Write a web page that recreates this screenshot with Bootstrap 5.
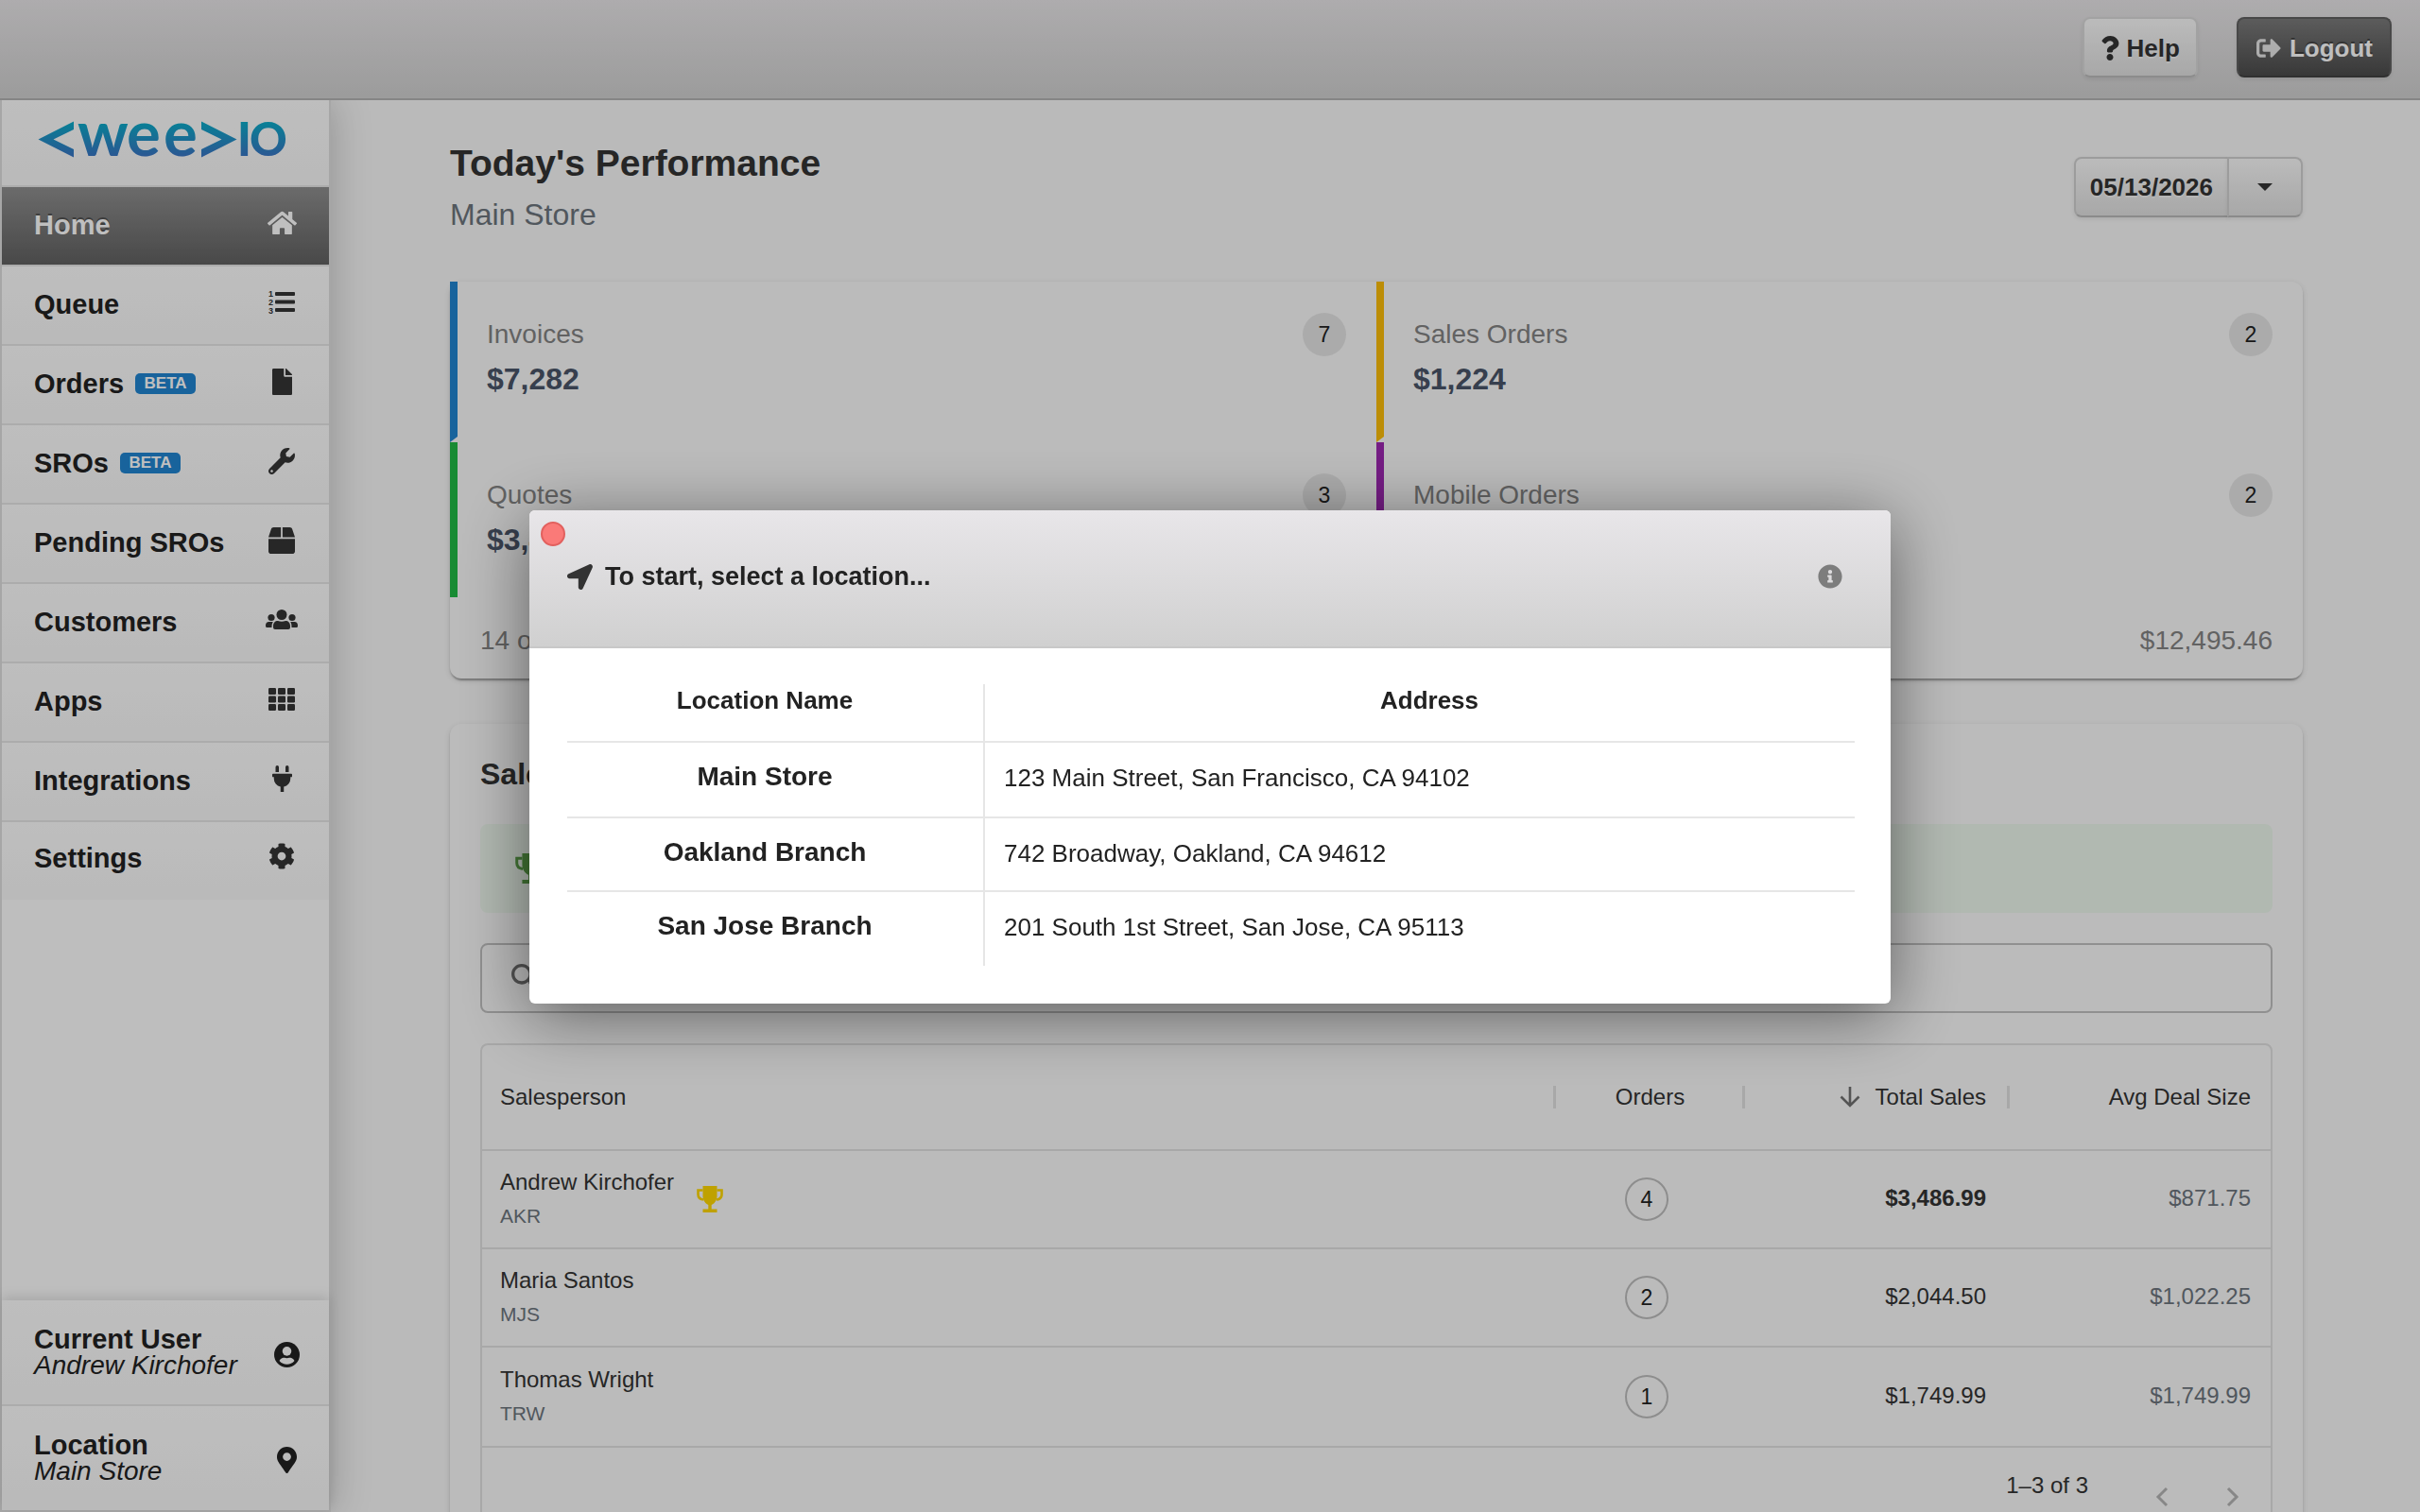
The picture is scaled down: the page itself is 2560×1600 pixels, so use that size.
<!DOCTYPE html>
<html lang="en">
<head>
<meta charset="utf-8">
<meta name="viewport" content="width=device-width, initial-scale=1">
<title>weeIO - Today's Performance</title>
<link href="https://cdn.jsdelivr.net/npm/bootstrap@5.3.0/dist/css/bootstrap.min.css" rel="stylesheet">
<style>
  :root { --bs-body-font-family: "Liberation Sans", Arial, sans-serif; --bs-body-color: #222; --bs-body-bg: #f8f8f8; }
  body { overflow: hidden; }
  svg { display: block; flex: none; overflow: visible; }
  svg:not([fill]) { fill: currentColor; }

  .app-top { height: 106px; border-bottom: 2px solid #b2b2b2; background: linear-gradient(#e8e6e8, #d0d0d0); padding: 0 30px 4px; gap: 41px; position: relative; flex: none; }
  .chrome-btn { height: 64px; font-size: 26px; line-height: 30px; font-weight: 700; border-radius: 8px; color: #333; background: linear-gradient(#fafafa, #e0e0e0); border: 2px solid #d0d0d0; border-bottom-color: #b8b8b8; text-shadow: 0 2px 0 rgba(255,255,255,.5); box-shadow: 0 2px 4px rgba(0,0,0,.08); }
  .chrome-btn:hover { background: linear-gradient(#fafafa, #e0e0e0); color: #333; }
  .help-btn { padding: 2px 17px 0; gap: 8px; border-color: #d8d8d8; border-bottom-color: #bbb; }
  .logout-btn, .logout-btn:hover { padding: 2px 18px 0; gap: 8px; color: #fff; background: linear-gradient(#7b7b7b, #4c4c4c); border-color: #606060; border-bottom-color: #404040; text-shadow: 0 -2px 0 rgba(0,0,0,.35); }
  .logout-btn svg { opacity: .85; }

  .side { width: 350px; flex: none; border: 2px solid #dedede; border-top: 0; background: #fefefe; box-shadow: 0 0 40px rgba(0,0,0,.22); clip-path: inset(0 -60px 0 0); z-index: 2; }
  .logo-box { height: 92px; border-bottom: 2px solid #e6e6e6; background: linear-gradient(#fefefe, #f8f8f8); }
  .side-item { height: 84px; padding: 0 32px 2px 34px; border-bottom: 2px solid #e6e6e6; background: linear-gradient(#fefefe, #f8f8f8); color: #222; font-size: 29px; line-height: 36px; font-weight: 700; }
  .side-item:hover { color: #222; }
  .side-item:last-child { border-bottom: 0; height: 82px; padding-bottom: 6px; }
  .side-item.active { color: #fff; background: linear-gradient(#8f8f8f, #616161); text-shadow: 0 -2px 0 rgba(0,0,0,.35); }
  .ico-box { width: 36px; height: 32px; margin-bottom: 4px; display: flex; align-items: center; justify-content: center; color: #353535; }
  .active .ico-box { color: #fff; }
  .beta-tag { font-size: 17px; line-height: 22px; height: 22px; width: 64px; text-align: center; border-radius: 5px; background: #2185d0; color: #fff; margin-left: 12px; }
  .side-foot { box-shadow: 0 -4px 12px rgba(0,0,0,.12); }
  .foot-item { height: 112px; padding: 0 27px 0 34px; border-bottom: 2px solid #e6e6e6; background: linear-gradient(#fefefe, #f8f8f8); color: #222; font-size: 29px; line-height: 28px; }
  .foot-item:last-child { height: 110px; border-bottom: 0; }
  .foot-item .ico-box { margin: 4px 0 0; }
  .foot-item em { font-size: 28px; }

  .content-area { padding: 44px 124px 0 126px; min-width: 0; overflow: hidden; }
  .page-title { font-size: 39px; line-height: 46px; font-weight: 700; margin: 0 0 11px; color: #333; }
  .page-sub { font-size: 32px; line-height: 40px; color: #6c757d; margin: 0 0 51px; }
  .date-group { margin-top: 16px; }
  .date-group .chrome-btn:first-child { padding: 0 15px; border-top-right-radius: 0; border-bottom-right-radius: 0; }
  .date-group .chrome-btn:last-child { width: 80px; margin-left: -2px; border-top-left-radius: 0; border-bottom-left-radius: 0; }

  .panel { background: #fafafa; border-radius: 12px; box-shadow: 0 4px 2px -2px rgba(0,0,0,.2), 0 2px 2px rgba(0,0,0,.14), 0 2px 6px rgba(0,0,0,.12); }
  .stat { height: 170px; padding: 33px 32px 0 31px; border-left: 8px solid; border-bottom: 6px solid transparent; }
  .stat-last { height: 164px; border-bottom: 0; }
  .stat-blue { border-left-color: #2185d0; } .stat-gold { border-left-color: #fbbd08; }
  .stat-green { border-left-color: #21ba45; } .stat-purple { border-left-color: #9c27b0; }
  .stat-name { font-size: 28px; line-height: 32px; color: #838383; padding-top: 7px; margin-bottom: 11px; }
  .stat-sum { font-size: 32px; line-height: 40px; font-weight: 700; color: #4a5568; }
  .count { width: 46px; height: 46px; border-radius: 50%; background: #e5e5e5; font-size: 23px; line-height: 46px; text-align: center; color: #222; }
  .count-line { background: none; border: 2px solid #bdbdbd; line-height: 43px; margin: 0 auto; }
  .panel-foot { height: 86px; padding: 6px 32px 0; font-size: 28px; line-height: 32px; color: #838383; }

  .board { padding: 33px 32px 40px; margin-top: 48px; }
  .board-title { font-size: 32px; line-height: 40px; font-weight: 700; margin: 0 0 33px; color: #333; }
  .leader { height: 94px; border-radius: 8px; background: #edf7ed; padding: 0 36px; margin-bottom: 32px; }
  .search-box { height: 74px; border: 2px solid #c0c0c0; border-radius: 8px; padding: 0 26px; gap: 16px; margin-bottom: 32px; color: #6f6f6f; }
  .search-box input { background: none; border: 0; box-shadow: none; font-size: 24px; }
  .grid-wrap { border: 2px solid #e0e0e0; border-radius: 8px; color: #333; }
  .people, .places { border-collapse: separate; border-spacing: 0; table-layout: fixed; margin: 0; }
  .people { --bs-table-bg: transparent; --bs-table-color: #333; font-size: 24px; line-height: 36px; }
  .people th, .people td { border-bottom: 2px solid #e0e0e0; padding: 0 20px 0 19px; vertical-align: middle; height: 104px; }
  .people th { height: 112px; font-weight: 400; background: linear-gradient(#e0e0e0, #e0e0e0) no-repeat right center / 3px 24px; }
  .people th:last-child { background: none; }
  .people tr:last-child td { height: 106px; }
  .people thead tr:last-child th { height: 112px; }
  .people .c-money { padding-right: 25px; }
  .people .c-avg { padding-right: 21px; }
  .people td.c-avg { color: #6c757d; }
  .people td.c-orders { padding: 0 20px 0 12px; }
  .people td.c-money, .people td.c-avg { padding-bottom: 2px; }
  .initials { font-size: 21px; color: #6c757d; }
  .col-orders { width: 200px; } .col-total { width: 280px; } .col-avg { width: 276px; }
  .pager { height: 104px; padding: 0 20px; font-size: 24px; color: #333; }
  .pager-text { margin: 0 58px 24px 0; }
  .pager button { border: 0; background: none; width: 40px; height: 40px; padding: 0; color: #b4b4b4; display: flex; align-items: center; justify-content: center; }
  .pager button + button { margin-left: 35px; }

  .modal-backdrop { --bs-backdrop-opacity: .25; }
  .modal { --bs-modal-width: 1440px; --bs-modal-margin: 0px; }
  .modal-dialog { padding-top: 2px; }
  .pick { border: 0; border-radius: 6px; box-shadow: 0 12px 70px rgba(0,0,0,.5); color: #222; background: #fff; }
  .pick-head { height: 146px; padding: 0 51px 4px 40px; border-bottom: 2px solid #c8c8c8; border-radius: 6px 6px 0 0; background: linear-gradient(#e8e6e9, #d0d0d0); }
  .pick-head h2 { font-size: 27px; line-height: 32px; font-weight: 700; margin: 0; gap: 13px; }
  .close-dot { position: absolute; left: 12px; top: 12px; width: 26px; height: 26px; border-radius: 50%; border: 2px solid #e2605e; background: #fa7a78; padding: 0; }
  .info-btn { border: 0; background: none; padding: 0; color: #7d7d7d; }
  .pick-body { padding: 38px 38px 40px 40px; }
  .places { --bs-table-color: #222; --bs-table-bg: #fff; font-size: 26px; line-height: 32px; }
  .places th, .places td { padding: 21px 0 0 20px; height: 78px; border-bottom: 2px solid #e6e6e6; vertical-align: top; }
  .places thead th { height: 62px; padding-top: 1px; text-align: center; }
  .places tbody tr:first-child > * { height: 80px; }
  .places tbody tr:last-child > * { border-bottom: 0; }
  .places tr > :first-child { width: 442px; padding-left: 0; padding-right: 22px; text-align: center; border-right: 2px solid #e6e6e6; }
  .places tbody th { font-size: 28px; padding-top: 20px; }
</style>
<script src="https://cdn.jsdelivr.net/npm/bootstrap@5.3.0/dist/js/bootstrap.bundle.min.js" defer></script>
</head>
<body>
<div class="d-flex flex-column vh-100">
  <header class="app-top d-flex align-items-center justify-content-end">
    <button type="button" class="btn chrome-btn help-btn d-flex align-items-center">
      <svg width="20" height="26" viewBox="0 0 384 512"><path d="M202.021 0C122.202 0 70.503 32.703 29.914 91.026c-7.363 10.58-5.093 25.086 5.178 32.874l43.138 32.709c10.373 7.865 25.132 6.026 33.253-4.148 25.049-31.381 43.63-49.449 82.757-49.449 30.764 0 68.816 19.799 68.816 49.631 0 22.552-18.617 34.134-48.993 51.164-35.423 19.86-82.299 44.576-82.299 106.405V320c0 13.255 10.745 24 24 24h72.471c13.255 0 24-10.745 24-24v-5.773c0-42.86 125.268-44.645 125.268-160.627C377.504 66.256 286.902 0 202.021 0zM192 373.459c-38.196 0-69.271 31.075-69.271 69.271 0 38.195 31.075 69.27 69.271 69.27s69.271-31.075 69.271-69.271-31.075-69.27-69.271-69.27z"/></svg>
      <span>Help</span>
    </button>
    <button type="button" class="btn chrome-btn logout-btn d-flex align-items-center">
      <svg width="28" height="26" viewBox="0 0 512 512"><path d="M497 273L329 441c-15 15-41 4.5-41-17v-96H152c-13.3 0-24-10.7-24-24v-96c0-13.3 10.7-24 24-24h136V88c0-21.4 25.9-32 41-17l168 168c9.3 9.4 9.3 24.6 0 34zM192 436v-40c0-6.6-5.4-12-12-12H96c-17.7 0-32-14.3-32-32V160c0-17.7 14.3-32 32-32h84c6.6 0 12-5.4 12-12V76c0-6.6-5.4-12-12-12H96c-53 0-96 43-96 96v192c0 53 43 96 96 96h84c6.6 0 12-5.4 12-12z"/></svg>
      <span>Logout</span>
    </button>
  </header>

  <div class="d-flex flex-grow-1" style="min-height:0">
    <aside class="side d-flex flex-column">
      <div class="logo-box">
        <svg width="346" height="90" viewBox="0 0 346 90" role="img" aria-label="weeIO">
          <defs><linearGradient id="brand" gradientUnits="userSpaceOnUse" x1="0" y1="24" x2="0" y2="60"><stop offset="0" stop-color="#0caac8"/><stop offset="1" stop-color="#3a74c4"/></linearGradient></defs>
          <g fill="url(#brand)" font-family="Lato, sans-serif" font-weight="700">
            <path d="M76 22.500V31L54.500 41.500 76 52V60.500L38.500 41.500z"/>
            <text font-size="67" x="80 132 171" y="59">wee</text>
            <path d="M211 22.500V31L232.500 41.500 211 52V60.500L248.500 41.500z"/>
            <text font-size="49" x="249 262" y="59" font-weight="900">IO</text>
          </g>
        </svg>
      </div>
      <nav class="d-flex flex-column" aria-label="Main">
        <a href="#" class="side-item active d-flex align-items-center text-decoration-none">Home
          <span class="ico-box ms-auto"><svg width="31" height="28" viewBox="0 0 576 512"><path d="M280.37 148.26L96 300.11V464a16 16 0 0 0 16 16l112.060-.29a16 16 0 0 0 15.920-16V368a16 16 0 0 1 16-16h64a16 16 0 0 1 16 16v95.640a16 16 0 0 0 16 16.050L464 480a16 16 0 0 0 16-16V300L295.670 148.260a12.190 12.190 0 0 0-15.300 0zM571.600 251.470L488 182.560V44.050a12 12 0 0 0-12-12h-56a12 12 0 0 0-12 12v72.610L318.470 43a48 48 0 0 0-61 0L4.340 251.470a12 12 0 0 0-1.600 16.900l25.500 31A12 12 0 0 0 45.150 301l235.220-193.740a12.190 12.190 0 0 1 15.300 0L530.900 301a12 12 0 0 0 16.900-1.600l25.500-31a12 12 0 0 0-1.700-16.930z"/></svg></span></a>
        <a href="#" class="side-item d-flex align-items-center text-decoration-none">Queue
          <span class="ico-box ms-auto"><svg width="28" height="26" viewBox="0 0 28 26"><rect x="7" y="2" width="21" height="4" rx="1"/><rect x="7" y="10.500" width="21" height="4" rx="1"/><rect x="7" y="19" width="21" height="4" rx="1"/><g font-size="9" font-weight="700" font-family="Liberation Sans, sans-serif"><text x="0" y="7">1</text><text x="0" y="16">2</text><text x="0" y="25">3</text></g></svg></span></a>
        <a href="#" class="side-item d-flex align-items-center text-decoration-none">Orders <span class="beta-tag">BETA</span>
          <span class="ico-box ms-auto"><svg width="21" height="28" viewBox="0 0 384 512"><path d="M224 136V0H24C10.700 0 0 10.700 0 24v464c0 13.300 10.700 24 24 24h336c13.300 0 24-10.700 24-24V160H248c-13.200 0-24-10.800-24-24zm160-14.100v6.100H256V0h6.100c6.400 0 12.500 2.500 17 7l97.900 98c4.500 4.500 7 10.600 7 16.900z"/></svg></span></a>
        <a href="#" class="side-item d-flex align-items-center text-decoration-none">SROs <span class="beta-tag">BETA</span>
          <span class="ico-box ms-auto"><svg width="28" height="28" viewBox="0 0 512 512"><path d="M507.730 109.100c-2.240-9.030-13.540-12.090-20.120-5.510l-74.360 74.360-67.880-11.310-11.310-67.880 74.360-74.360c6.620-6.620 3.430-17.900-5.660-20.160-47.380-11.740-99.550.91-136.580 37.930-39.640 39.640-50.550 97.100-34.050 147.200L18.740 402.760c-24.990 24.990-24.990 65.510 0 90.500 24.990 24.990 65.510 24.990 90.500 0l213.210-213.210c50.120 16.710 107.470 5.680 147.370-34.220 37.070-37.070 49.700-89.320 37.910-136.730zM64 472c-13.250 0-24-10.750-24-24 0-13.260 10.750-24 24-24s24 10.740 24 24c0 13.250-10.750 24-24 24z"/></svg></span></a>
        <a href="#" class="side-item d-flex align-items-center text-decoration-none">Pending SROs
          <span class="ico-box ms-auto"><svg width="28" height="28" viewBox="0 0 512 512"><path d="M509.500 184.600L458.900 32.800C452.400 13.200 434.100 0 413.400 0H272v192h238.700c-.4-2.500-.4-5-1.200-7.400zM240 0H98.600c-20.700 0-39 13.200-45.500 32.800L2.500 184.600c-.8 2.400-.8 4.900-1.200 7.400H240V0zM0 224v240c0 26.500 21.500 48 48 48h416c26.500 0 48-21.500 48-48V224H0z"/></svg></span></a>
        <a href="#" class="side-item d-flex align-items-center text-decoration-none">Customers
          <span class="ico-box ms-auto"><svg width="34" height="22" viewBox="0 0 34 22"><circle cx="17" cy="5.500" r="5.500"/><path d="M8 17.500c0-3.500 2-5.500 5-5.500q4 1.500 8 0c3 0 5 2 5 5.500V19q0 2-2 2H10q-2 0-2-2z"/><circle cx="6" cy="8.500" r="3.600"/><circle cx="28" cy="8.500" r="3.600"/><path d="M0 17c0-2.500 1.300-4 3.500-4h4.300C6.800 14.500 6.500 16 6.500 19H1.500Q0 19 0 17.500zM34 17c0-2.500-1.300-4-3.500-4h-4.300c1 1.500 1.300 3 1.300 6h5q1.500 0 1.500-1.500z"/></svg></span></a>
        <a href="#" class="side-item d-flex align-items-center text-decoration-none">Apps
          <span class="ico-box ms-auto"><svg width="28" height="24" viewBox="0 0 28 24"><rect width="8" height="7" rx="1.200"/><rect x="10" width="8" height="7" rx="1.200"/><rect x="20" width="8" height="7" rx="1.200"/><rect y="8.500" width="8" height="7" rx="1.200"/><rect x="10" y="8.500" width="8" height="7" rx="1.200"/><rect x="20" y="8.500" width="8" height="7" rx="1.200"/><rect y="17" width="8" height="7" rx="1.200"/><rect x="10" y="17" width="8" height="7" rx="1.200"/><rect x="20" y="17" width="8" height="7" rx="1.200"/></svg></span></a>
        <a href="#" class="side-item d-flex align-items-center text-decoration-none">Integrations
          <span class="ico-box ms-auto"><svg width="21" height="28" viewBox="0 0 384 512"><path d="M320,32a32,32,0,0,0-64,0v96h64Zm48,128H16A16,16,0,0,0,0,176v32a16,16,0,0,0,16,16H32v32A160.070,160.070,0,0,0,160,412.800V512h64V412.800A160.070,160.070,0,0,0,352,256V224h16a16,16,0,0,0,16-16V176A16,16,0,0,0,368,160ZM128,32a32,32,0,0,0-64,0v96h64Z"/></svg></span></a>
        <a href="#" class="side-item d-flex align-items-center text-decoration-none">Settings
          <span class="ico-box ms-auto"><svg width="28" height="28" viewBox="0 0 512 512"><path d="M487.400 315.700l-42.600-24.600c4.300-23.200 4.300-47 0-70.200l42.600-24.600c4.900-2.800 7.100-8.600 5.500-14-11.100-35.600-30-67.800-54.700-94.600-3.800-4.100-10-5.100-14.800-2.300L380.800 110c-17.900-15.400-38.500-27.300-60.800-35.100V25.800c0-5.600-3.900-10.500-9.400-11.700-36.700-8.200-74.300-7.800-109.200 0-5.500 1.200-9.400 6.100-9.400 11.700V75c-22.200 7.900-42.800 19.800-60.800 35.100L88.700 85.500c-4.900-2.800-11-1.900-14.800 2.300-24.700 26.700-43.600 58.900-54.700 94.600-1.700 5.400.6 11.200 5.500 14L67.300 221c-4.300 23.200-4.300 47 0 70.200l-42.600 24.600c-4.900 2.800-7.100 8.600-5.500 14 11.100 35.600 30 67.800 54.700 94.600 3.800 4.100 10 5.100 14.800 2.300l42.600-24.600c17.900 15.400 38.500 27.300 60.800 35.100v49.200c0 5.600 3.900 10.500 9.400 11.700 36.700 8.200 74.300 7.800 109.200 0 5.500-1.200 9.400-6.100 9.400-11.700v-49.200c22.200-7.900 42.800-19.800 60.800-35.100l42.600 24.600c4.900 2.800 11 1.900 14.800-2.300 24.700-26.700 43.600-58.900 54.700-94.600 1.500-5.500-.7-11.300-5.600-14.100zM256 336c-44.100 0-80-35.900-80-80s35.900-80 80-80 80 35.900 80 80-35.900 80-80 80z"/></svg></span></a>
      </nav>
      <div class="side-foot mt-auto">
        <a href="#" class="foot-item d-flex align-items-center justify-content-between text-decoration-none">
          <span class="d-flex flex-column"><strong>Current User</strong><em>Andrew Kirchofer</em></span>
          <span class="ico-box"><svg width="27" height="27" viewBox="0 0 26 26"><circle cx="13" cy="13" r="13" fill="#222"/><circle cx="13" cy="9.500" r="4.600" fill="#fcfcfc"/><path d="M5.300 19.200c1.200-2.600 4-3.100 5.200-3.100q2.500.9 5 0c1.200 0 4 .5 5.200 3.100-2 2.400-4.700 3.700-7.700 3.700s-5.700-1.300-7.700-3.700z" fill="#fcfcfc"/></svg></span></a>
        <a href="#" class="foot-item d-flex align-items-center justify-content-between text-decoration-none">
          <span class="d-flex flex-column"><strong>Location</strong><em>Main Store</em></span>
          <span class="ico-box"><svg width="21" height="28" viewBox="0 0 384 512"><path fill="#222" d="M172.268 501.670C26.970 291.031 0 269.413 0 192 0 85.961 85.961 0 192 0s192 85.961 192 192c0 77.413-26.970 99.031-172.268 309.670-9.535 13.774-29.930 13.773-39.464 0zM192 272c44.183 0 80-35.817 80-80s-35.817-80-80-80-80 35.817-80 80 35.817 80 80 80z"/></svg></span></a>
      </div>
    </aside>

    <main class="content-area flex-grow-1">
      <div class="d-flex justify-content-between align-items-start">
        <div>
          <h1 class="page-title">Today's Performance</h1>
          <p class="page-sub">Main Store</p>
        </div>
        <div class="date-group d-flex">
          <button type="button" class="btn chrome-btn">05/13/2026</button>
          <button type="button" class="btn chrome-btn d-flex align-items-center justify-content-center" aria-label="Choose date"><svg width="16" height="8" viewBox="0 0 16 8"><path d="M0 0h16L8 8z"/></svg></button>
        </div>
      </div>

      <section class="panel">
        <div class="row g-0">
          <div class="col-6"><div class="stat stat-blue d-flex justify-content-between"><div><div class="stat-name">Invoices</div><div class="stat-sum">$7,282</div></div><span class="count">7</span></div></div>
          <div class="col-6"><div class="stat stat-gold d-flex justify-content-between"><div><div class="stat-name">Sales Orders</div><div class="stat-sum">$1,224</div></div><span class="count">2</span></div></div>
          <div class="col-6"><div class="stat stat-last stat-green d-flex justify-content-between"><div><div class="stat-name">Quotes</div><div class="stat-sum">$3,488</div></div><span class="count">3</span></div></div>
          <div class="col-6"><div class="stat stat-last stat-purple d-flex justify-content-between"><div><div class="stat-name">Mobile Orders</div><div class="stat-sum">$501</div></div><span class="count">2</span></div></div>
        </div>
        <div class="panel-foot d-flex align-items-center justify-content-between"><span>14 orders</span><span>$12,495.46</span></div>
      </section>

      <section class="panel board">
        <h2 class="board-title">Sales</h2>
        <div class="leader d-flex align-items-center">
          <svg width="34" height="32" viewBox="0 0 28 28" fill="#5a9e48"><path d="M6.500 0h15v11c0 4-3 8-5.800 9v4.500h5.800V28h-15v-3.500h5.800V20c-2.800-1-5.800-5-5.800-9z"/><path d="M6.500 4.500H1.500V9c0 3 2 5 5.500 5.500M21.500 4.500h5V9c0 3-2 5-5.500 5.500" fill="none" stroke="#5a9e48" stroke-width="2.600"/></svg>
        </div>
        <div class="search-box d-flex align-items-center">
          <svg width="40" height="40" viewBox="0 0 24 24"><path d="M15.500 14h-.79l-.28-.27C15.410 12.590 16 11.110 16 9.500 16 5.910 13.090 3 9.500 3S3 5.910 3 9.500 5.910 16 9.500 16c1.610 0 3.090-.59 4.230-1.570l.27.28v.79l5 4.990L20.490 19l-4.990-5zm-6 0C7.010 14 5 11.990 5 9.500S7.010 5 9.500 5 14 7.010 14 9.500 11.990 14 9.500 14z"/></svg>
          <input type="search" class="form-control" aria-label="Search salespeople">
        </div>
        <div class="grid-wrap">
          <table class="table people">
            <colgroup><col><col class="col-orders"><col class="col-total"><col class="col-avg"></colgroup>
            <thead><tr>
              <th scope="col">Salesperson</th>
              <th scope="col" class="text-center">Orders</th>
              <th scope="col" class="c-money"><span class="d-flex align-items-center justify-content-end"><svg class="me-3" width="22" height="22" viewBox="0 0 22 22" fill="none" stroke="#707070" stroke-width="2.600"><path d="M11 0v19M1.500 10.500L11 20l9.500-9.500"/></svg>Total Sales</span></th>
              <th scope="col" class="c-avg text-end">Avg Deal Size</th>
            </tr></thead>
            <tbody>
              <tr><td><div class="d-flex align-items-center"><div><div>Andrew Kirchofer</div><div class="initials">AKR</div></div><svg class="ms-4" width="28" height="28" viewBox="0 0 28 28" fill="#ffd700"><path d="M6.500 0h15v11c0 4-3 8-5.800 9v4.500h5.800V28h-15v-3.500h5.800V20c-2.800-1-5.800-5-5.800-9z"/><path d="M6.500 4.500H1.500V9c0 3 2 5 5.500 5.500M21.500 4.500h5V9c0 3-2 5-5.500 5.500" fill="none" stroke="#ffd700" stroke-width="2.600"/></svg></div></td><td class="c-orders"><div class="count count-line">4</div></td><td class="c-money text-end"><strong>$3,486.99</strong></td><td class="c-avg text-end">$871.75</td></tr>
              <tr><td><div>Maria Santos</div><div class="initials">MJS</div></td><td class="c-orders"><div class="count count-line">2</div></td><td class="c-money text-end">$2,044.50</td><td class="c-avg text-end">$1,022.25</td></tr>
              <tr><td><div>Thomas Wright</div><div class="initials">TRW</div></td><td class="c-orders"><div class="count count-line">1</div></td><td class="c-money text-end">$1,749.99</td><td class="c-avg text-end">$1,749.99</td></tr>
            </tbody>
          </table>
          <div class="pager d-flex align-items-center justify-content-end">
            <span class="pager-text">1–3 of 3</span>
            <button type="button" aria-label="Previous page" disabled><svg width="12" height="20" viewBox="0 0 12 20" fill="none" stroke="currentColor" stroke-width="3"><path d="M11 1L2 10l9 9"/></svg></button>
            <button type="button" aria-label="Next page" disabled><svg width="12" height="20" viewBox="0 0 12 20" fill="none" stroke="currentColor" stroke-width="3"><path d="M1 1l9 9-9 9"/></svg></button>
          </div>
        </div>
      </section>
    </main>
  </div>
</div>

<div class="modal-backdrop show"></div>
<div class="modal show d-block" tabindex="-1" role="dialog" aria-labelledby="pickTitle">
  <div class="modal-dialog modal-dialog-centered">
    <div class="modal-content pick">
      <div class="pick-head d-flex align-items-center justify-content-between">
        <button type="button" class="close-dot" aria-label="Close"></button>
        <h2 id="pickTitle" class="d-flex align-items-center"><svg width="27" height="27" viewBox="0 0 512 512" fill="#333"><path d="M444.520 3.520L28.740 195.420c-47.970 22.390-31.980 92.750 19.190 92.750h175.910v175.910c0 51.170 70.360 67.170 92.750 19.190l191.900-415.780c15.990-38.390-25.590-79.970-63.970-63.970z"/></svg><span>To start, select a location...</span></h2>
        <button type="button" class="info-btn" aria-label="Information"><svg width="26" height="26" viewBox="0 0 512 512"><path d="M256 8C119.043 8 8 119.083 8 256c0 136.997 111.043 248 248 248s248-111.003 248-248C504 119.083 392.957 8 256 8zm0 110c23.196 0 42 18.804 42 42s-18.804 42-42 42-42-18.804-42-42 18.804-42 42-42zm56 254c0 6.627-5.373 12-12 12h-88c-6.627 0-12-5.373-12-12v-24c0-6.627 5.373-12 12-12h12v-64h-12c-6.627 0-12-5.373-12-12v-24c0-6.627 5.373-12 12-12h64c6.627 0 12 5.373 12 12v100h12c6.627 0 12 5.373 12 12v24z"/></svg></button>
      </div>
      <div class="pick-body">
        <table class="table places">
          <thead><tr><th scope="col">Location Name</th><th scope="col">Address</th></tr></thead>
          <tbody>
            <tr><th scope="row">Main Store</th><td>123 Main Street, San Francisco, CA 94102</td></tr>
            <tr><th scope="row">Oakland Branch</th><td>742 Broadway, Oakland, CA 94612</td></tr>
            <tr><th scope="row">San Jose Branch</th><td>201 South 1st Street, San Jose, CA 95113</td></tr>
          </tbody>
        </table>
      </div>
    </div>
  </div>
</div>
</body>
</html>
